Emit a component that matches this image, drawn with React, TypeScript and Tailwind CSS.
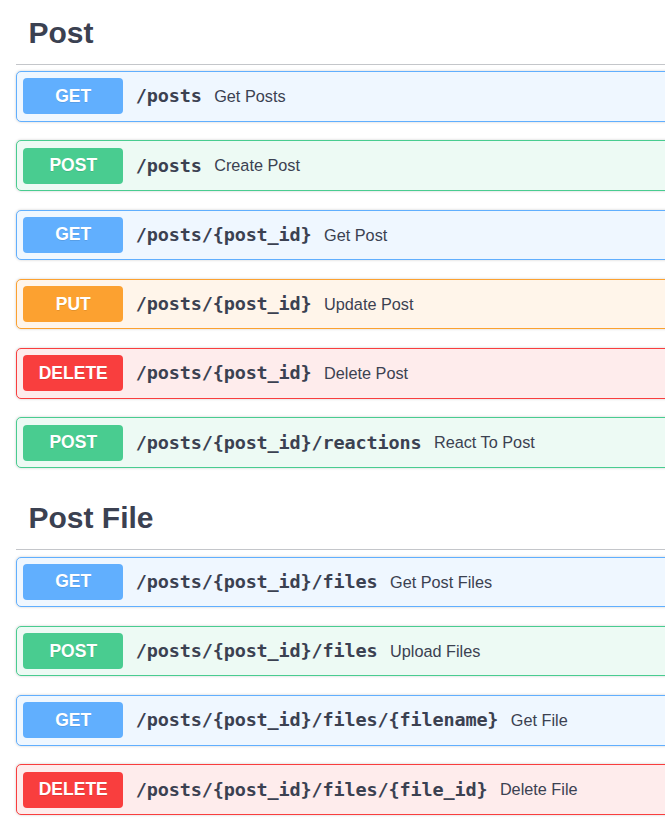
import React from "react";

type Method = "GET" | "POST" | "PUT" | "DELETE";

const methodStyles: Record<Method, { block: string; badge: string }> = {
  GET: { block: "border-[#61affe] bg-[#eff7ff]", badge: "bg-[#61affe]" },
  POST: { block: "border-[#49cc90] bg-[#edfaf4]", badge: "bg-[#49cc90]" },
  PUT: { block: "border-[#fca130] bg-[#fff5ea]", badge: "bg-[#fca130]" },
  DELETE: { block: "border-[#f93e3e] bg-[#feecec]", badge: "bg-[#f93e3e]" },
};

const sections: { tag: string; ops: { method: Method; path: string; summary: string }[] }[] = [
  {
    tag: "Post",
    ops: [
      { method: "GET", path: "/posts", summary: "Get Posts" },
      { method: "POST", path: "/posts", summary: "Create Post" },
      { method: "GET", path: "/posts/{post_id}", summary: "Get Post" },
      { method: "PUT", path: "/posts/{post_id}", summary: "Update Post" },
      { method: "DELETE", path: "/posts/{post_id}", summary: "Delete Post" },
      { method: "POST", path: "/posts/{post_id}/reactions", summary: "React To Post" },
    ],
  },
  {
    tag: "Post File",
    ops: [
      { method: "GET", path: "/posts/{post_id}/files", summary: "Get Post Files" },
      { method: "POST", path: "/posts/{post_id}/files", summary: "Upload Files" },
      { method: "GET", path: "/posts/{post_id}/files/{filename}", summary: "Get File" },
      { method: "DELETE", path: "/posts/{post_id}/files/{file_id}", summary: "Delete File" },
    ],
  },
];

const Operation = ({ method, path, summary }: { method: Method; path: string; summary: string }) => {
  const s = methodStyles[method];
  return (
    <div
      className={`mb-[18.75px] flex items-center rounded-[5px] border p-[6.25px] shadow-[0_0_3px_rgba(0,0,0,0.19)] ${s.block}`}
    >
      <span
        className={`w-[100px] shrink-0 rounded-[4px] py-[7.5px] text-center text-[17.5px] font-bold leading-[21px] text-white [text-shadow:0_1px_0_rgba(0,0,0,0.1)] ${s.badge}`}
        style={{ fontFamily: '"Liberation Sans", Arial, sans-serif' }}
      >
        {method}
      </span>
      <div className="flex items-center gap-[12.5px] whitespace-nowrap px-[12.5px] text-[#3b4151]">
        <span
          className="text-[18.5px] font-bold tracking-[-0.15px]"
          style={{ fontFamily: '"DejaVu Sans Mono", "Liberation Mono", monospace' }}
        >
          {path}
        </span>
        <span
          className="text-[16.25px]"
          style={{ fontFamily: '"Liberation Sans", Arial, sans-serif' }}
        >
          {summary}
        </span>
      </div>
    </div>
  );
};

const App = () => {
  return (
    <div className="h-[831px] w-[665px] overflow-hidden bg-white">
      <div className="w-[900px] pl-4 pt-[1px]">
        {sections.map((section) => (
          <div key={section.tag}>
            <div className="mb-[6.25px] border-b border-[rgba(59,65,81,0.3)] pb-[12.5px] pl-[12.5px] pt-[12.5px]">
              <h3
                className="text-[30px] font-bold leading-[37.75px] text-[#3b4151]"
                style={{ fontFamily: '"Liberation Sans", Arial, sans-serif' }}
              >
                {section.tag}
              </h3>
            </div>
            {section.ops.map((op, idx) => (
              <Operation key={`${op.method}-${op.path}-${idx}`} {...op} />
            ))}
          </div>
        ))}
      </div>
    </div>
  );
};

export default App;
